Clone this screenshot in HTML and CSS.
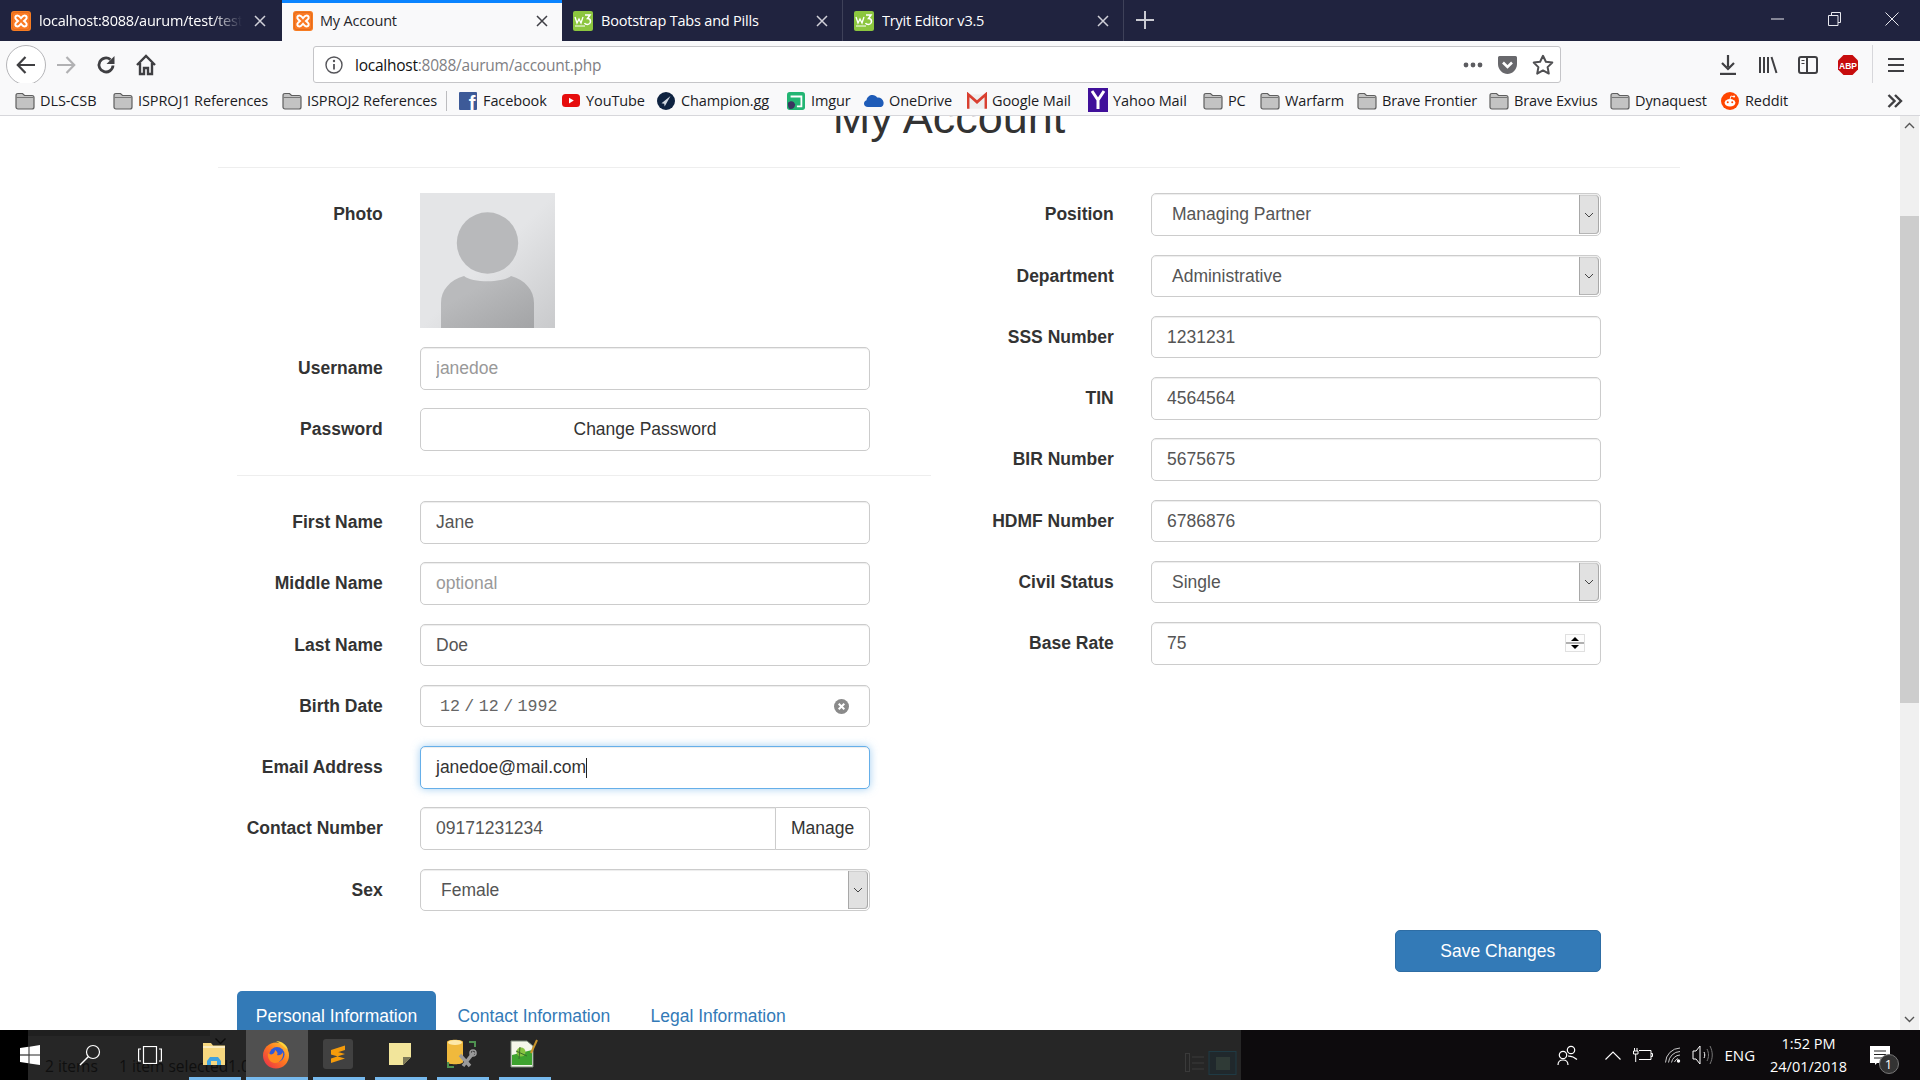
FILE: index.html
```html
<!DOCTYPE html>
<html lang="en">
<head>
<meta charset="utf-8">
<title>My Account</title>
<link rel="stylesheet" href="styles.css">
</head>
<body>
<svg class="defs" width="0" height="0" aria-hidden="true">
  <defs>
    <symbol id="xampp" viewBox="0 0 20 20">
      <rect width="20" height="20" rx="3" fill="#f77c22"/>
      <rect x="1.5" y="1.5" width="17" height="17" rx="2" fill="#fb7a24" stroke="#d9641a" stroke-width=".6"/>
      <path d="M6.5 4.5c-2.2 0-3 2.400-1.200 4L7 10l-1.700 1.500c-1.800 1.600-1 4 1.200 4 1.300 0 2.400-1.300 3.500-2.600 1.100 1.300 2.200 2.600 3.500 2.600 2.200 0 3-2.400 1.200-4L13 10l1.700-1.500c1.800-1.600 1-4-1.200-4-1.300 0-2.400 1.300-3.500 2.600C8.900 5.800 7.800 4.500 6.500 4.500z" fill="none" stroke="#fff" stroke-width="2"/>
    </symbol>
    <symbol id="w3" viewBox="0 0 20 20">
      <rect width="20" height="20" rx="2" fill="#8cc63f"/>
      <path d="M2 6l2 6 2-4 2 4 2-6" fill="none" stroke="#fff" stroke-width="1.300"/>
      <path d="M12 4h5l-2.500 3.500c2.500 0 3 1.500 3 3s-1.500 3-3 3-2.500-.5-3-1.500" fill="none" stroke="#fff" stroke-width="1.500"/>
      <path d="M2 15h10" stroke="#fff" stroke-width="1"/>
    </symbol>
    <symbol id="x" viewBox="0 0 12 12">
      <path d="M1 1l10 10M11 1L1 11" fill="none" stroke="currentColor" stroke-width="1.500"/>
    </symbol>
    <symbol id="folder" viewBox="0 0 20 18">
      <path d="M1 3.500C1 2 1.800 1.500 3 1.500h4.500L9.500 3.500H17c1.200 0 2 .7 2 2V15c0 1.200-.8 2-2 2H3c-1.200 0-2-.8-2-2z" fill="#c3c3c3" stroke="#5f5f5f" stroke-width="1.200"/>
      <path d="M1.500 5.500h17" stroke="#777" stroke-width="1"/>
    </symbol>
    <symbol id="chev" viewBox="0 0 10 6">
      <path d="M1 1l4 4 4-4" fill="none" stroke="#444" stroke-width="1"/>
    </symbol>
    <linearGradient id="ffg" x1="1" y1="0" x2="0" y2="1"><stop offset="0" stop-color="#ffd43a"/><stop offset=".45" stop-color="#ff7a1f"/><stop offset="1" stop-color="#e8264f"/></linearGradient>
  </defs>
</svg>

<div class="app">
  <header class="tabbar">
    <div class="tab tab-first">
      <svg class="fav"><use href="#xampp"/></svg>
      <span class="tab-title fade">localhost:8088/aurum/test/test3</span>
      <svg class="tab-x"><use href="#x"/></svg>
    </div>
    <div class="tab tab-active">
      <svg class="fav"><use href="#xampp"/></svg>
      <span class="tab-title">My Account</span>
      <svg class="tab-x"><use href="#x"/></svg>
    </div>
    <div class="tab tab-sep">
      <svg class="fav"><use href="#w3"/></svg>
      <span class="tab-title">Bootstrap Tabs and Pills</span>
      <svg class="tab-x"><use href="#x"/></svg>
    </div>
    <div class="tab tab-sep">
      <svg class="fav"><use href="#w3"/></svg>
      <span class="tab-title">Tryit Editor v3.5</span>
      <svg class="tab-x"><use href="#x"/></svg>
    </div>
    <div class="tab-plus">
      <svg width="18" height="18" viewBox="0 0 18 18"><path d="M9 0v18M0 9h18" stroke="#c9cad2" stroke-width="2"/></svg>
    </div>
    <div class="win-controls">
      <span class="win-btn"><svg width="13" height="2" viewBox="0 0 13 2"><path d="M0 1h13" stroke="#e8e8ee" stroke-width="1"/></svg></span>
      <span class="win-btn"><svg width="13" height="14" viewBox="0 0 13 14"><path d="M3.500 3V.5h9v10H10M.5 3.500h9.500v10H.5z" fill="none" stroke="#e8e8ee" stroke-width="1"/></svg></span>
      <span class="win-btn"><svg width="14" height="14" viewBox="0 0 14 14"><path d="M.5.5l13 13M13.500.5l-13 13" stroke="#e8e8ee" stroke-width="1"/></svg></span>
    </div>
  </header>

  <nav class="navbar">
    <span class="nav-btn back-btn">
      <svg width="20" height="18" viewBox="0 0 20 18"><path d="M19 9H2M9.500 1L1.800 9l7.700 8" fill="none" stroke="#3f3f42" stroke-width="2.200"/></svg>
    </span>
    <span class="nav-btn">
      <svg width="20" height="18" viewBox="0 0 20 18"><path d="M1 9h17M10.500 1l7.700 8-7.700 8" fill="none" stroke="#b1b1b3" stroke-width="2.200"/></svg>
    </span>
    <span class="nav-btn">
      <svg width="20" height="20" viewBox="0 0 20 20"><path d="M17 10.500A7 7 0 1 1 14.500 4.600" fill="none" stroke="#3f3f42" stroke-width="2.800"/><path d="M18.500 1v8h-8z" fill="#3f3f42"/></svg>
    </span>
    <span class="nav-btn">
      <svg width="22" height="22" viewBox="0 0 22 22"><path d="M2 11l9-9 9 9M5 9v11h4v-6h4v6h4V9" fill="none" stroke="#3f3f42" stroke-width="2.400"/></svg>
    </span>
    <div class="urlbar">
      <svg class="url-info" width="18" height="18" viewBox="0 0 18 18"><circle cx="9" cy="9" r="8" fill="none" stroke="#55555a" stroke-width="1.400"/><path d="M9 8v5.500" stroke="#55555a" stroke-width="1.800"/><circle cx="9" cy="5" r="1.200" fill="#55555a"/></svg>
      <span class="url-text"><span class="url-host">localhost</span>:8088/aurum/account.php</span>
      <span class="url-act"><svg width="20" height="6" viewBox="0 0 20 6"><circle cx="3" cy="3" r="2.400" fill="#5c5c60"/><circle cx="10" cy="3" r="2.400" fill="#5c5c60"/><circle cx="17" cy="3" r="2.400" fill="#5c5c60"/></svg></span>
      <span class="url-act"><svg width="21" height="20" viewBox="0 0 21 20"><path d="M2.500 1h16A1.500 1.500 0 0 1 20 2.500V9c0 6-5 10-9.500 10S1 15 1 9V2.500A1.500 1.500 0 0 1 2.500 1z" fill="#68686c"/><path d="M6 7.500l4.500 4.500L15 7.500" fill="none" stroke="#fff" stroke-width="2.600"/></svg></span>
      <span class="url-act"><svg width="22" height="21" viewBox="0 0 22 21"><path d="M11 1.800l2.900 6 6.400.8-4.700 4.500 1.200 6.500-5.800-3.200-5.800 3.200 1.200-6.500-4.700-4.500 6.400-.8z" fill="none" stroke="#4f4f52" stroke-width="2" stroke-linejoin="round"/></svg></span>
    </div>
    <div class="nav-actions">
      <span class="nav-btn"><svg width="18" height="20" viewBox="0 0 18 20"><path d="M9 0v12M3 8l6 6 6-6" fill="none" stroke="#3f3f42" stroke-width="2.200"/><path d="M1 19h16" stroke="#3f3f42" stroke-width="2.400"/></svg></span>
      <span class="nav-btn"><svg width="20" height="18" viewBox="0 0 20 18"><path d="M2 1v16M6 1v16M10 1v16M13.500 1l5 16" fill="none" stroke="#3f3f42" stroke-width="2"/></svg></span>
      <span class="nav-btn"><svg width="20" height="18" viewBox="0 0 20 18"><rect x="1" y="1" width="18" height="16" rx="2" fill="none" stroke="#3f3f42" stroke-width="2"/><path d="M9 1v16" stroke="#3f3f42" stroke-width="2"/><path d="M3.500 4.500h3M3.500 7.500h3" stroke="#3f3f42" stroke-width="1.200"/></svg></span>
      <span class="nav-btn"><svg width="22" height="22" viewBox="0 0 22 22"><path d="M6.500 1h9L21 6.500v9L15.500 21h-9L1 15.500v-9z" fill="#c70d0d"/><text x="11" y="14.500" text-anchor="middle" class="abp-text">ABP</text></svg></span>
      <span class="nav-sep"></span>
      <span class="nav-btn nav-menu"><svg width="16" height="16" viewBox="0 0 16 16"><path d="M0 2h16M0 8h16M0 14h16" stroke="#3f3f42" stroke-width="2.200"/></svg></span>
    </div>
  </nav>

  <div class="bookmarks">
    <span class="bm"><svg class="bm-i"><use href="#folder"/></svg>DLS-CSB</span>
    <span class="bm"><svg class="bm-i"><use href="#folder"/></svg>ISPROJ1 References</span>
    <span class="bm"><svg class="bm-i"><use href="#folder"/></svg>ISPROJ2 References</span>
    <span class="bm-sep"></span>
    <span class="bm"><svg class="bm-i" viewBox="0 0 18 18"><rect width="18" height="18" rx="1" fill="#3d5a98"/><text x="13" y="18" text-anchor="middle" class="fb-text">f</text></svg>Facebook</span>
    <span class="bm"><svg class="bm-i" viewBox="0 0 18 18"><rect y="2" width="18" height="13" rx="3.500" fill="#e60d0d"/><path d="M7 5.800v5.600l4.800-2.800z" fill="#fff"/></svg>YouTube</span>
    <span class="bm"><svg class="bm-i" viewBox="0 0 20 20"><circle cx="10" cy="10" r="10" fill="#0e2240"/><path d="M15 4.500L5 12.500l3 .5.500 3z" fill="#cfd6e0"/></svg>Champion.gg</span>
    <span class="bm"><svg class="bm-i" viewBox="0 0 20 20"><rect width="20" height="20" rx="3" fill="#22b573"/><path d="M4 5h12v11h-5" fill="none" stroke="#fff" stroke-width="2"/><path d="M1 12c3-3 7-2 8 2 0 3-2 5-5 5-2 0-3-2-3-7z" fill="#3a3560"/></svg>Imgur</span>
    <span class="bm"><svg class="bm-i" viewBox="0 0 20 14"><path d="M4 13C1.500 13 0 11.500 0 9.500 0 8 1 6.700 2.500 6.300 3 3 5.500 1 8.500 1c2 0 3.700 1 4.700 2.500C16 3 19 5 19.500 8c.5 3-1 5-3.500 5z" fill="#1f5cb8"/></svg>OneDrive</span>
    <span class="bm"><svg class="bm-i" viewBox="0 0 18 16"><path d="M1 2h16v13H1z" fill="#eee"/><path d="M1 15V2l8 7 8-7v13" fill="none" stroke="#d93f30" stroke-width="2.400"/></svg>Google Mail</span>
    <span class="bm"><svg class="bm-i bm-i-lg" viewBox="0 0 20 24"><rect width="20" height="24" fill="#40109a"/><path d="M4 3l6 9 6-9M10 12v9" fill="none" stroke="#fff" stroke-width="3"/></svg>Yahoo Mail</span>
    <span class="bm"><svg class="bm-i"><use href="#folder"/></svg>PC</span>
    <span class="bm"><svg class="bm-i"><use href="#folder"/></svg>Warfarm</span>
    <span class="bm"><svg class="bm-i"><use href="#folder"/></svg>Brave Frontier</span>
    <span class="bm"><svg class="bm-i"><use href="#folder"/></svg>Brave Exvius</span>
    <span class="bm"><svg class="bm-i"><use href="#folder"/></svg>Dynaquest</span>
    <span class="bm"><svg class="bm-i" viewBox="0 0 20 20"><circle cx="10" cy="10" r="10" fill="#ff4500"/><ellipse cx="10" cy="12" rx="6" ry="4.200" fill="#fff"/><circle cx="7.500" cy="11.500" r="1.100" fill="#ff4500"/><circle cx="12.500" cy="11.500" r="1.100" fill="#ff4500"/><path d="M10 8l1-3.500 3 .7" fill="none" stroke="#fff" stroke-width="1"/><circle cx="14.500" cy="5" r="1.200" fill="#fff"/></svg>Reddit</span>
    <span class="bm-more"><svg width="16" height="14" viewBox="0 0 16 14"><path d="M1.500 1l6 6-6 6M8 1l6 6-6 6" fill="none" stroke="#3f3f42" stroke-width="2.400"/></svg></span>
  </div>

  <div class="viewport">
    <main class="page">
      <h1 class="page-title">My Account</h1>
      <hr class="rule-top">
      <div class="columns">
        <section class="col">
          <div class="form-row row-photo">
            <label class="lbl lbl-photo">Photo</label>
            <svg class="photo" width="135" height="135" viewBox="0 0 135 135">
              <defs>
                <linearGradient id="pbg" x1="0" y1="0" x2="1" y2="1"><stop offset=".5" stop-color="#e4e5e7"/><stop offset="1" stop-color="#c9cacc"/></linearGradient>
                <linearGradient id="pfg" x1="0" y1="0" x2="1" y2="1"><stop offset=".3" stop-color="#b9babc"/><stop offset="1" stop-color="#a3a4a6"/></linearGradient>
              </defs>
              <rect width="135" height="135" fill="url(#pbg)"/>
              <ellipse cx="67.500" cy="50" rx="30.700" ry="30.700" fill="#b8b9bb"/>
              <path d="M21 135V110C21 97 30 87 44 83 52 90 83 90 91 83 105 87 114 97 114 110V135Z" fill="url(#pfg)"/>
            </svg>
          </div>
          <div class="form-row"><label class="lbl">Username</label><input class="ctl" placeholder="janedoe"></div>
          <div class="form-row"><label class="lbl">Password</label><button class="ctl btn-plain" type="button">Change Password</button></div>
          <hr class="rule-mid">
          <div class="form-row"><label class="lbl">First Name</label><input class="ctl" value="Jane"></div>
          <div class="form-row"><label class="lbl">Middle Name</label><input class="ctl" placeholder="optional"></div>
          <div class="form-row"><label class="lbl">Last Name</label><input class="ctl" value="Doe"></div>
          <div class="form-row">
            <label class="lbl">Birth Date</label>
            <div class="ctl date-ctl">
              <span class="date-text">12 / 12 / 1992</span>
              <svg class="date-clear" width="15" height="15" viewBox="0 0 15 15"><circle cx="7.500" cy="7.500" r="7.500" fill="#8a8a8a"/><path d="M4.700 4.700l5.600 5.600M10.300 4.700l-5.600 5.600" stroke="#fff" stroke-width="2"/></svg>
            </div>
          </div>
          <div class="form-row">
            <label class="lbl">Email Address</label>
            <div class="ctl ctl-focus"><span>janedoe@mail.com</span><i class="caret"></i></div>
          </div>
          <div class="form-row">
            <label class="lbl">Contact Number</label>
            <div class="group"><input class="ctl group-input" value="09171231234"><button class="group-btn" type="button">Manage</button></div>
          </div>
          <div class="form-row">
            <label class="lbl">Sex</label>
            <div class="ctl sel"><span>Female</span><span class="sel-arrow"><svg width="10" height="6"><use href="#chev"/></svg></span></div>
          </div>
        </section>

        <section class="col">
          <div class="form-row">
            <label class="lbl">Position</label>
            <div class="ctl sel"><span>Managing Partner</span><span class="sel-arrow"><svg width="10" height="6"><use href="#chev"/></svg></span></div>
          </div>
          <div class="form-row">
            <label class="lbl">Department</label>
            <div class="ctl sel"><span>Administrative</span><span class="sel-arrow"><svg width="10" height="6"><use href="#chev"/></svg></span></div>
          </div>
          <div class="form-row"><label class="lbl">SSS Number</label><input class="ctl" value="1231231"></div>
          <div class="form-row"><label class="lbl">TIN</label><input class="ctl" value="4564564"></div>
          <div class="form-row"><label class="lbl">BIR Number</label><input class="ctl" value="5675675"></div>
          <div class="form-row"><label class="lbl">HDMF Number</label><input class="ctl" value="6786876"></div>
          <div class="form-row">
            <label class="lbl">Civil Status</label>
            <div class="ctl sel"><span>Single</span><span class="sel-arrow"><svg width="10" height="6"><use href="#chev"/></svg></span></div>
          </div>
          <div class="form-row">
            <label class="lbl">Base Rate</label>
            <div class="ctl num-ctl">
              <span>75</span>
              <span class="spin">
                <svg width="20" height="18" viewBox="0 0 20 18"><rect width="20" height="18" fill="#e0e0e0"/><rect x="1" y="1" width="18" height="7" fill="#fdfdfd"/><rect x="1" y="10" width="18" height="7" fill="#fdfdfd"/><path d="M1 9h18" stroke="#b0b0b0" stroke-width="2"/><path d="M6 7l4-4 4 4z" fill="#000"/><path d="M6 11l4 4 4-4z" fill="#000"/></svg>
              </span>
            </div>
          </div>
        </section>
      </div>
      <div class="actions"><button class="btn-save" type="button">Save Changes</button></div>
      <ul class="pills">
        <li class="pill pill-active">Personal Information</li>
        <li class="pill">Contact Information</li>
        <li class="pill">Legal Information</li>
      </ul>
    </main>
    <aside class="scrollbar">
      <div class="sb-track">
        <svg class="sb-arrow sb-up" width="11" height="7" viewBox="0 0 11 7"><path d="M1 6l4.500-4.500L10 6" fill="none" stroke="#555" stroke-width="1.400"/></svg>
        <div class="sb-thumb"></div>
        <svg class="sb-arrow sb-down" width="11" height="7" viewBox="0 0 11 7"><path d="M1 1l4.500 4.500L10 1" fill="none" stroke="#555" stroke-width="1.400"/></svg>
      </div>
    </aside>
  </div>

  <footer class="taskbar">
    <div class="ghost">
      <span class="ghost-strip"></span>
      <span class="ghost-a">2 items</span>
      <span class="ghost-b">1 item selected</span>
      <span class="ghost-c">1.05 MB</span>
      <svg class="ghost-chev" width="11" height="6" viewBox="0 0 11 6"><path d="M.5.5l5 5 5-5" fill="none" stroke="#0c0c0c" stroke-width="1.400"/></svg>
      <svg class="ghost-view" width="52" height="24" viewBox="0 0 52 24"><rect x=".5" y="2.500" width="4" height="18" fill="none" stroke="#3a3a3a"/><path d="M7 6h12M7 12h12M7 18h12" stroke="#3a3a3a"/><rect x="24" y=".5" width="27" height="23" fill="#20282c" stroke="#1f3a44"/><rect x="31" y="6" width="14" height="13" fill="#2f3a36"/></svg>
    </div>
    <span class="tb-start"><svg width="20" height="20" viewBox="0 0 20 20"><path d="M0 3l8.500-1.200V9.500H0zM9.500 1.700L20 0v9.500H9.500zM0 10.500h8.500v7.700L0 17zM9.500 10.500H20V20L9.500 18.400z" fill="#fff"/></svg></span>
    <span class="tb-tool"><svg width="22" height="22" viewBox="0 0 22 22"><circle cx="14" cy="8" r="6.500" fill="none" stroke="#fff" stroke-width="1.200"/><path d="M9.500 12.500L1 21" stroke="#fff" stroke-width="1.400"/></svg></span>
    <span class="tb-tool"><svg width="24" height="18" viewBox="0 0 24 18"><rect x="5.500" y=".5" width="13" height="17" fill="none" stroke="#fff" stroke-width="1.200"/><path d="M3 3H.6v12H3M21 3h2.400v12H21" fill="none" stroke="#fff" stroke-width="1.200"/></svg></span>
    <span class="tb-app tb-run tb-split">
      <svg width="24" height="24" viewBox="0 0 24 24"><path d="M1 1h8l2 2.500h12V23H1z" fill="#f6d77f"/><path d="M1 5h22" stroke="#fff" stroke-width="1"/><path d="M8 15h8l3 4v4H5v-4z" fill="#3ea2e0"/><rect x="9" y="19" width="6" height="4" fill="#f6d77f"/></svg>
    </span>
    <span class="tb-app tb-active">
      <svg width="28" height="29" viewBox="0 0 28 29"><circle cx="14" cy="15.500" r="13" fill="url(#ffg)"/><path d="M14 1c4 2 6 4 7 5l5 4c-1-5-6-9-12-9z" fill="#ffd43a"/><circle cx="15" cy="14.500" r="7.500" fill="#2f5ad6"/><path d="M6 13c3 3 7 1 7-3 3 2 3 4 2 5 3 1 5-1 6-3 1 6-3 11-8 11-4 0-8-4-7-10z" fill="#ff8a1f"/></svg>
    </span>
    <span class="tb-app tb-run">
      <svg width="30" height="30" viewBox="0 0 30 30"><rect width="30" height="30" rx="3" fill="#414141"/><path d="M22 6.500L8 11v4.500l14-4.500zM8 11v4.500l14 4V15zM22 15v4.500L8 24v-4.500z" fill="#f59b0b"/></svg>
    </span>
    <span class="tb-app tb-run">
      <svg width="24" height="24" viewBox="0 0 24 24"><path d="M1 1h22v14l-8 8H1z" fill="#f2e59b"/><path d="M23 15H15v8z" fill="#7c7858"/></svg>
    </span>
    <span class="tb-app tb-run">
      <svg width="32" height="30" viewBox="0 0 32 30"><path d="M1 3c0-3 16-3 16 0v20c0 3-16 3-16 0z" fill="#f0b93c"/><ellipse cx="9" cy="3.500" rx="7" ry="2.500" fill="#fde8a8"/><path d="M23 2h7v6h-2V4h-5zM1 23h2v4h5v2H1z" fill="#4e9150"/><path d="M14 16l10 11M28 13l-11 14" stroke="#9a9a9a" stroke-width="3.400"/><circle cx="27" cy="14" r="3" fill="none" stroke="#9a9a9a" stroke-width="1.600"/></svg>
    </span>
    <span class="tb-app tb-run">
      <svg width="30" height="30" viewBox="0 0 30 30"><path d="M2 2h16l6 5v21H2z" fill="#f4f7ea" stroke="#7a8a7a"/><path d="M3 16l20-5v15H3z" fill="#3ea32f"/><circle cx="12" cy="13" r="4.500" fill="#86c440"/><path d="M7 12l11 5M11 8l-1 12" stroke="#3b6b2b"/><path d="M22 14l6-13" stroke="#c9952c" stroke-width="2"/></svg>
    </span>
    <div class="tray">
      <svg class="tray-people" width="21" height="22" viewBox="0 0 21 22"><circle cx="14" cy="6" r="3.700" fill="none" stroke="#fff" stroke-width="1.200"/><circle cx="6" cy="11" r="3.700" fill="none" stroke="#fff" stroke-width="1.200"/><path d="M1 21c0-3 2-5 5-5s5 2 5 5M11 12c3 .2 6 .8 9 3.500" fill="none" stroke="#fff" stroke-width="1.200"/></svg>
      <svg class="tray-up" width="16" height="9" viewBox="0 0 16 9"><path d="M.5 8.500L8 1l7.500 7.500" fill="none" stroke="#fff" stroke-width="1.100"/></svg>
      <svg class="tray-bat" width="20" height="14" viewBox="0 0 20 14"><path d="M6 2.500h12v9H6M18 5.500h1.500v3H18" fill="none" stroke="#fff"/><path d="M1.500 0v3M4 0v3M.5 3h4.500v3H.5zM2.700 6v8" stroke="#fff" fill="none"/></svg>
      <svg class="tray-wifi" width="16" height="16" viewBox="0 0 16 16"><path d="M.5 15.500A15 15 0 0 1 15 1M3.500 15.500A12 12 0 0 1 15 4.500M6.500 15.500A9 9 0 0 1 15 8M9.500 15A6 6 0 0 1 13 11.500" fill="none" stroke="#c9c9c9" stroke-width="1"/><circle cx="13.500" cy="14" r="1.700" fill="#fff"/></svg>
      <svg class="tray-vol" width="21" height="20" viewBox="0 0 21 20"><path d="M1 6h3l4-5v18l-4-5H1z" fill="none" stroke="#fff"/><path d="M12 7c1 2 1 4 0 6" fill="none" stroke="#fff"/><path d="M15 4c2 4 2 8 0 12M18 1c3 6 3 12 0 18" fill="none" stroke="#777"/></svg>
      <span class="tray-lang">ENG</span>
      <div class="tray-clock"><span>1:52 PM</span><span>24/01/2018</span></div>
      <div class="tray-note">
        <svg width="20" height="19" viewBox="0 0 20 19"><path d="M0 0h20v17H7l-2 2v-2H0z" fill="#fff"/><path d="M4 5h12M4 8.500h12M4 12h8" stroke="#222" stroke-width="1"/></svg>
        <span class="tray-badge">1</span>
      </div>
    </div>
  </footer>
</div>
</body>
</html>
```
FILE: styles.css
```css
* { box-sizing: border-box; }
html, body { margin: 0; padding: 0; height: 100%; overflow: hidden; }
body { font-family: "Liberation Sans", Arial, sans-serif; background: #fff; }
.defs { position: absolute; }
.app { width: 1920px; height: 1080px; display: flex; flex-direction: column; overflow: hidden; }

/* tab strip */
.tabbar { height: 41px; flex: none; display: flex; background: #20233f; color: #fff; font-family: "Open Sans", sans-serif; font-size: 14.5px; }
.tab { width: 281px; height: 41px; display: flex; align-items: center; padding: 0 11px; flex: none; position: relative; letter-spacing: -.2px; }
.tab-first { width: 282px; }
.tab-first .tab-x { margin-right: 5px; }
.tab-active { width: 280px; background: #f9f9fa; color: #26262a; border-top: 3px solid #0a84ff; padding-bottom: 3px; }
.tab-sep { border-right: 1px solid #3e4159; }
.fav { width: 20px; height: 20px; flex: none; margin-right: 8px; }
.tab-active .fav { margin-right: 7px; }
.tab-title { flex: 1; white-space: nowrap; overflow: hidden; }
.fade { -webkit-mask-image: linear-gradient(90deg, #000 85%, transparent 100%); mask-image: linear-gradient(90deg, #000 85%, transparent 100%); }
.tab-x { width: 12px; height: 12px; flex: none; margin: 0 3px 0 12px; color: #d0d0d8; }
.tab-active .tab-x { color: #3f3f45; }
.tab-plus { width: 42px; display: flex; align-items: center; justify-content: center; padding-bottom: 1px; }
.win-controls { margin-left: auto; display: flex; }
.win-btn { width: 57px; display: flex; align-items: center; justify-content: center; padding-bottom: 3px; }

/* nav */
.navbar { height: 42px; flex: none; display: flex; align-items: flex-start; background: #f9f9fa; padding-left: 6px; }
.nav-btn { width: 40px; height: 40px; margin-top: 4px; flex: none; display: flex; align-items: center; justify-content: center; }
.back-btn { border: 1px solid #b5b5b8; border-radius: 50%; background: #fff; }
.urlbar { width: 1248px; height: 37px; margin: 5px 0 0 147px; flex: none; background: #fff; border: 1px solid #c5c5c8; border-radius: 3px; display: flex; align-items: center; font-family: "Open Sans", sans-serif; font-size: 15.5px; color: #7f7f84; }
.url-info { margin-left: 11px; flex: none; }
.url-text { margin-left: 12px; flex: 1; white-space: nowrap; letter-spacing: -.24px; }
.url-host { color: #111; }
.url-act { width: 35px; display: flex; align-items: center; justify-content: center; flex: none; }
.nav-actions { display: flex; margin-left: 147px; }
.nav-sep { width: 1px; height: 40px; margin: 4px 0 0 4px; background: #d7d7db; }
.nav-menu { margin-left: 3px; }
.abp-text { font: bold 8.500px "Liberation Sans", sans-serif; fill: #fff; }

/* bookmarks */
.bookmarks { height: 33px; flex: none; background: #f9f9fa; border-bottom: 1px solid #d7d7db; padding: 3px 0 0 15px; display: grid; grid-template-columns: 98px 169px 164px 12px 103px 95px 130px 78px 103px 121px 115px 57px 97px 132px 121px 110px 167px 1fr; align-items: center; font-family: "Open Sans", sans-serif; font-size: 14.5px; color: #1b1b1f; letter-spacing: -.1px; }
.bm { display: flex; align-items: center; white-space: nowrap; }
.bm-i { width: 20px; height: 18px; margin-right: 5px; flex: none; }
.bm-i-lg { height: 24px; margin-top: -2px; }
.fb-text { font: bold 20px "Liberation Sans", sans-serif; fill: #fff; }
.bm-sep { width: 1px; height: 20px; background: #bcbcbf; }
.bm-more { display: flex; }

/* page */
.viewport { flex: 1; min-height: 0; display: flex; background: #fff; }
.page { flex: 1; min-width: 0; overflow: hidden; padding: 0 220px 0 218px; font-size: 17.5px; color: #333; }
.page-title { margin: -23.5px 0 0; height: 50px; line-height: 50px; font-size: 45px; font-weight: 400; text-align: center; color: #333; }
.rule-top { margin: 24.5px 0 25.25px; border: 0; border-top: 1px solid #eee; }
.rule-mid { margin: 24px 0 25.25px; border: 0; border-top: 1px solid #eee; width: 694px; }
.columns { display: flex; }
.col { width: 731px; padding: 0 18.75px; }
.form-row { display: grid; grid-template-columns: 146px 450px; column-gap: 37.25px; align-items: center; margin-bottom: 18.75px; }
.row-photo { align-items: start; }
.lbl { font-weight: 700; text-align: right; color: #333; padding-top: .5px; }
.lbl-photo { padding-top: 11px; }
.photo { display: block; }
.ctl { width: 100%; height: 42.5px; padding: .5px 15px 0; font: 17.5px "Liberation Sans", Arial, sans-serif; color: #555; background: #fff; border: 1px solid #ccc; border-radius: 5px; box-shadow: inset 0 1px 1px rgba(0,0,0,.075); display: flex; align-items: center; outline: 0; }
.ctl::placeholder { color: #999; opacity: 1; }
.btn-plain { justify-content: center; color: #333; box-shadow: none; }
.date-ctl { padding: .5px 20px 0 19px; justify-content: space-between; }
.date-text { font: 16.6px "Liberation Mono", monospace; word-spacing: -5.5px; color: #666; }
.ctl-focus { border-color: #66afe9; box-shadow: inset 0 1px 1px rgba(0,0,0,.075), 0 0 8px rgba(102,175,233,.6); color: #333; }
.caret { width: 1px; height: 20px; background: #222; margin-left: 0; flex: none; }
.group { display: flex; height: 42.5px; }
.group-input { flex: 1; min-width: 0; border-radius: 5px 0 0 5px; }
.group-btn { width: 95px; flex: none; margin-left: -1px; background: #fff; border: 1px solid #ccc; border-radius: 0 5px 5px 0; font: 17.5px "Liberation Sans", Arial, sans-serif; color: #333; padding: 0; }
.sel { position: relative; padding-left: 20px; }
.sel-arrow { position: absolute; top: 1px; right: 1px; bottom: 1px; width: 20px; background: #e1e1e1; border: 1px solid #a8a8a8; border-width: 0 1px 0 1px; border-radius: 0 4px 4px 0; display: flex; align-items: center; justify-content: center; box-shadow: inset 0 -1px 0 #b5b5b5, inset 0 1px 0 #cfcfcf; }
.num-ctl { position: relative; justify-content: flex-start; padding-left: 15px; }
.spin { position: absolute; right: 15px; top: 11px; display: flex; }
.actions { display: flex; justify-content: flex-end; padding-right: 79px; }
.btn-save { width: 206.5px; height: 42px; margin-top: .25px; background: #337ab7; border: 1px solid #2e6da4; border-radius: 5px; color: #fff; font: 17.5px "Liberation Sans", Arial, sans-serif; padding: 0; }
.pills { list-style: none; margin: 19.25px 0 0; padding: 0 0 0 19px; display: flex; gap: 2.75px; }
.pill { padding: 12.5px 18.75px 14px; line-height: 25px; color: #337ab7; border-radius: 5px 5px 0 0; }
.pill-active { background: #337ab7; color: #fff; }

/* scrollbar */
.scrollbar { width: 20px; flex: none; background: #fff; padding-right: 1px; }
.sb-track { height: 100%; background: #f0f0f0; display: flex; flex-direction: column; align-items: center; }
.sb-arrow { flex: none; }
.sb-up { margin-top: 6px; }
.sb-thumb { width: 100%; height: 487px; margin-top: 87px; background: #cdcdcd; }
.sb-down { margin-top: auto; margin-bottom: 7px; }

/* taskbar */
.taskbar { height: 50px; flex: none; position: relative; display: flex; align-items: center; background: linear-gradient(90deg, #000 28px, #262626 28px, #262626 1241px, #0d0b0d 1241px); color: #fff; }
.ghost { position: absolute; inset: 0; font: 15.5px "Open Sans", sans-serif; color: #0f0f0f; }
.ghost span, .ghost svg { position: absolute; }
.ghost-strip { left: 28px; top: 0; width: 182px; height: 6px; background: #1f1f1f; }
.ghost-a { left: 45px; top: 25px; }
.ghost-b { left: 119px; top: 25px; }
.ghost-c { left: 228px; top: 25px; }
.ghost-chev { left: 215px; top: 8px; }
.ghost-view { left: 1185px; top: 21px; }
.tb-start { position: relative; width: 60px; display: flex; justify-content: center; }
.tb-tool { position: relative; width: 60px; height: 50px; display: flex; align-items: center; justify-content: center; }
.tb-app { position: relative; width: 62px; height: 50px; display: flex; align-items: center; justify-content: center; flex: none; padding: 0 2px 2px 0; }
.tb-run::after { content: ""; position: absolute; left: 5px; right: 5px; bottom: 0; height: 3px; background: #76b9ed; }
.tb-split { margin-left: 4px; }
.tb-active { background: #505050; }
.tb-active::after { content: ""; position: absolute; left: 0; right: 0; bottom: 0; height: 3px; background: #76b9ed; }
.tray { position: absolute; right: 0; top: 0; bottom: 0; width: 363px; display: flex; align-items: center; }
.tray-people { flex: none; }
.tray-up { margin-left: 26.5px; flex: none; }
.tray-bat { margin-left: 12px; flex: none; }
.tray-wifi { margin-left: 12px; flex: none; }
.tray-vol { margin-left: 11.5px; flex: none; }
.tray-lang { margin-left: 11.5px; font: 15px "Open Sans", sans-serif; width: 30px; flex: none; }
.tray-clock { margin-left: 15px; width: 78px; flex: none; display: flex; flex-direction: column; align-items: center; gap: 3px; font: 14.5px/20px "Open Sans", sans-serif; }
.tray-note { position: relative; margin-left: 22px; width: 20px; height: 19px; flex: none; }
.tray-note svg { display: block; }
.tray-badge { position: absolute; left: 9px; top: 8.5px; width: 20px; height: 20px; border-radius: 50%; background: #333; border: 1px solid #777; font: 13px/18px "Open Sans", sans-serif; text-align: center; }
```
